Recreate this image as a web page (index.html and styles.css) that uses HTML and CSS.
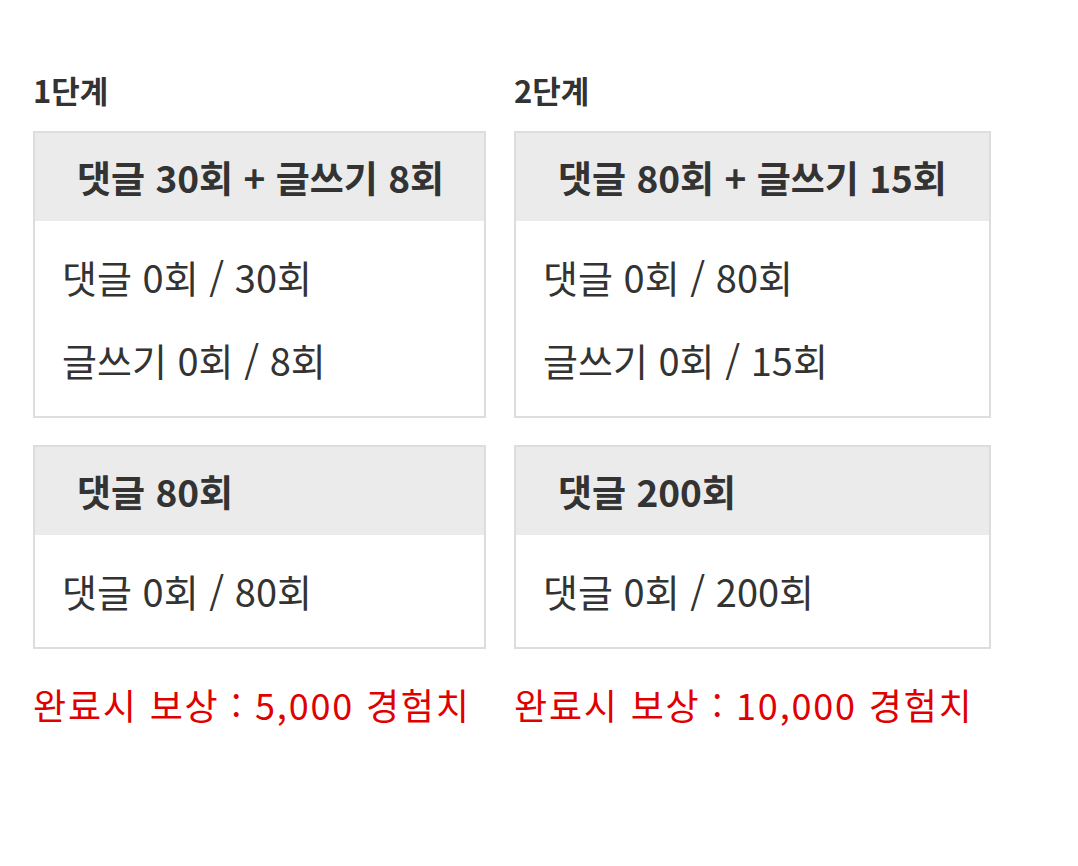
FILE: index.html
```html
<!DOCTYPE html>
<html lang="ko">
<head>
<meta charset="utf-8">
<link rel="stylesheet" href="styles.css">
</head>
<body>
<div class="stages">
  <section class="stage stage-1">
    <h2 class="stage-title">1단계</h2>
    <div class="mission">
      <div class="mission-head">댓글 30회 + 글쓰기 8회</div>
      <div class="mission-body">
        <p class="row">댓글 0회 / 30회</p>
        <p class="row">글쓰기 0회 / 8회</p>
      </div>
    </div>
    <div class="mission">
      <div class="mission-head">댓글 80회</div>
      <div class="mission-body">
        <p class="row">댓글 0회 / 80회</p>
      </div>
    </div>
    <p class="reward">완료시 보상 : 5,000 경험치</p>
  </section>
  <section class="stage stage-2">
    <h2 class="stage-title">2단계</h2>
    <div class="mission">
      <div class="mission-head">댓글 80회 + 글쓰기 15회</div>
      <div class="mission-body">
        <p class="row">댓글 0회 / 80회</p>
        <p class="row">글쓰기 0회 / 15회</p>
      </div>
    </div>
    <div class="mission">
      <div class="mission-head">댓글 200회</div>
      <div class="mission-body">
        <p class="row">댓글 0회 / 200회</p>
      </div>
    </div>
    <p class="reward">완료시 보상 : 10,000 경험치</p>
  </section>
</div>
</body>
</html>
```

FILE: styles.css
```css
html, body {
  margin: 0;
  padding: 0;
  background: #ffffff;
}

body {
  font-family: "Noto Sans CJK KR", "Noto Sans", sans-serif;
  color: #333333;
}

.stages {
  display: flex;
  gap: 28px;
  padding: 70px 0 0 33px;
}

.stage {
  display: flex;
  flex-direction: column;
}

.stage-1 { width: 453px; }
.stage-2 { width: 477px; }

.stage-title {
  margin: 0 0 21px;
  font-size: 31px;
  line-height: 40px;
  font-weight: 700;
  color: #333333;
}

.mission {
  border: 2px solid #dddddd;
  margin-bottom: 27px;
}

.mission:last-of-type {
  margin-bottom: 0;
}

.mission-head {
  background: #ebebeb;
  height: 88px;
  line-height: 88px;
  padding-left: 42px;
  font-size: 37px;
  font-weight: 700;
  white-space: nowrap;
}

.mission-body {
  padding: 14px 0 15px 27px;
}

.row {
  margin: 0;
  font-size: 38px;
  line-height: 83px;
  white-space: nowrap;
}

.reward {
  margin: 33px 0 0;
  font-size: 36px;
  line-height: 44px;
  letter-spacing: 1.8px;
  color: #e00000;
  white-space: nowrap;
}
```
